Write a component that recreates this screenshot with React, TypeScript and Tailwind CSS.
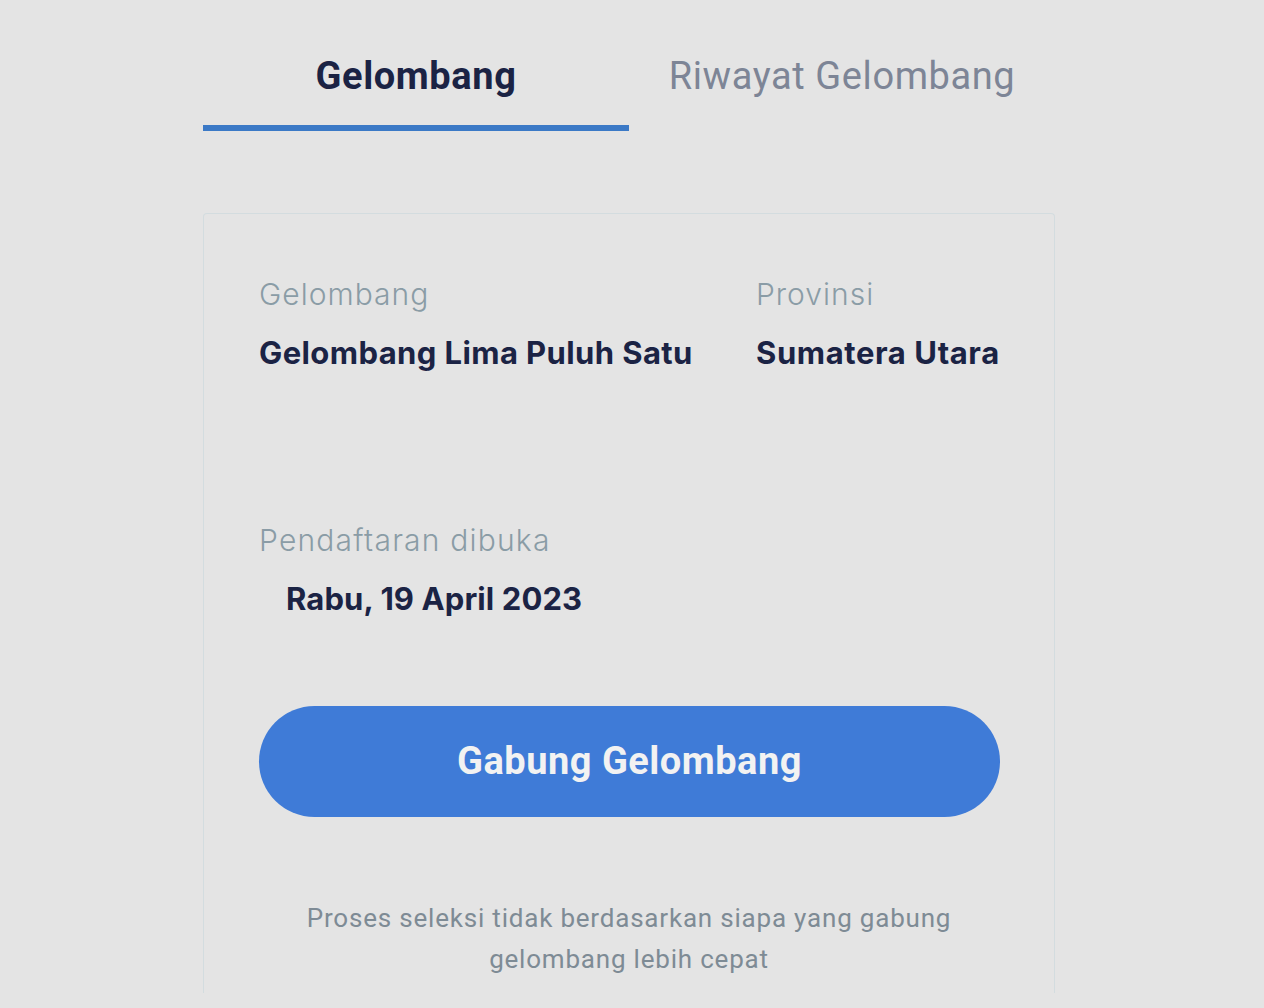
import React from 'react';

const tabs = ['Gelombang', 'Riwayat Gelombang'];

export default function App() {
  const active = 0;

  return (
    <div className="min-h-screen bg-[#e4e4e4] font-['Inter',sans-serif]">
      <div className="ml-[203px] w-[852px]">
        {/* Tabs */}
        <div className="grid grid-cols-2">
          {tabs.map((tab, i) => (
            <div key={tab} className="flex h-[131px] flex-col">
              <div
                className={`pt-[54px] text-center text-[38px] leading-[44px] font-['Roboto',sans-serif] ${
                  i === active ? 'font-bold tracking-[0.6px] text-[#1b2344]' : 'font-normal tracking-[0.6px] text-[#7d8596]'
                }`}
              >
                {tab}
              </div>
              {i === active && <div className="mt-auto h-[6px] bg-[#3b79c6]" />}
            </div>
          ))}
        </div>

        {/* Card */}
        <div className="mt-[82px] min-h-[780px] rounded-t-[4px] border border-b-0 border-[#d3dcdf] px-[55px] pb-[13px]">
          <div className="grid grid-cols-[497px_1fr] pt-[62px]">
            <div>
              <div className="text-[30px] leading-[36px] font-light tracking-[1px] text-[#8a9ca6]">Gelombang</div>
              <div className="mt-[23px] whitespace-nowrap text-[31px] leading-[36px] font-bold tracking-[0.4px] text-[#1b2344]">Gelombang Lima Puluh Satu</div>
            </div>
            <div>
              <div className="text-[30px] leading-[36px] font-light tracking-[1px] text-[#8a9ca6]">Provinsi</div>
              <div className="mt-[23px] whitespace-nowrap text-[31px] leading-[36px] font-bold tracking-[0.6px] text-[#1b2344]">Sumatera Utara</div>
            </div>
          </div>

          <div className="mt-[151px]">
            <div className="text-[30px] leading-[36px] font-light tracking-[1.2px] text-[#8a9ca6]">Pendaftaran dibuka</div>
            <div className="mt-[23px] pl-[27px] text-[31px] leading-[36px] font-bold tracking-[0.1px] text-[#1b2344]">Rabu, 19 April 2023</div>
          </div>

          <button className="mt-[89px] flex h-[111px] w-[741px] items-center justify-center rounded-full bg-[#3f7bd7] font-['Roboto',sans-serif] text-[38px] font-bold tracking-[0.5px] text-[#f2f2f2]">
            Gabung Gelombang
          </button>

          <p className="mx-auto mt-[81px] w-[720px] text-center font-['Roboto',sans-serif] text-[26px] leading-[41px] tracking-[0.8px] text-[#7e8b95]">
            Proses seleksi tidak berdasarkan siapa yang gabung gelombang lebih cepat
          </p>
        </div>
      </div>
    </div>
  );
}
